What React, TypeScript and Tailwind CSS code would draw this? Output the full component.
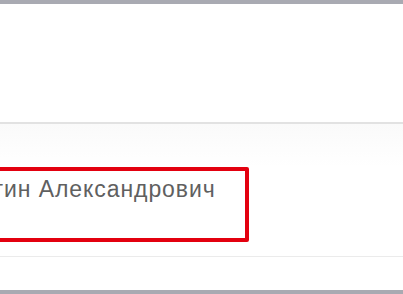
export default function App() {
  return (
    <div className="flex h-[294px] w-[403px] flex-col overflow-hidden bg-white font-['Liberation_Sans',Arial,sans-serif]">
      <div className="h-[4px] shrink-0 bg-[#a9aab2]" />
      <div className="h-[118px] shrink-0" />
      <div className="h-[2px] shrink-0 bg-[#e2e2e2]" />
      <div className="h-[43px] shrink-0 bg-gradient-to-b from-[#fafafa] to-white" />
      <div className="-ml-[110px] flex h-[75px] w-[359px] shrink-0 rounded-[2px] border-[4px] border-[#e3000f] pl-[6px] pt-[5px]">
        <span className="text-[23px] leading-[27px] tracking-[0.04em] whitespace-nowrap text-[#606060]">
          Константин Александрович
        </span>
      </div>
      <div className="h-[14px] shrink-0" />
      <div className="h-px shrink-0 bg-[#ebebeb]" />
      <div className="flex-1" />
      <div className="h-[4px] shrink-0 bg-[#a9aab2]" />
    </div>
  );
}
